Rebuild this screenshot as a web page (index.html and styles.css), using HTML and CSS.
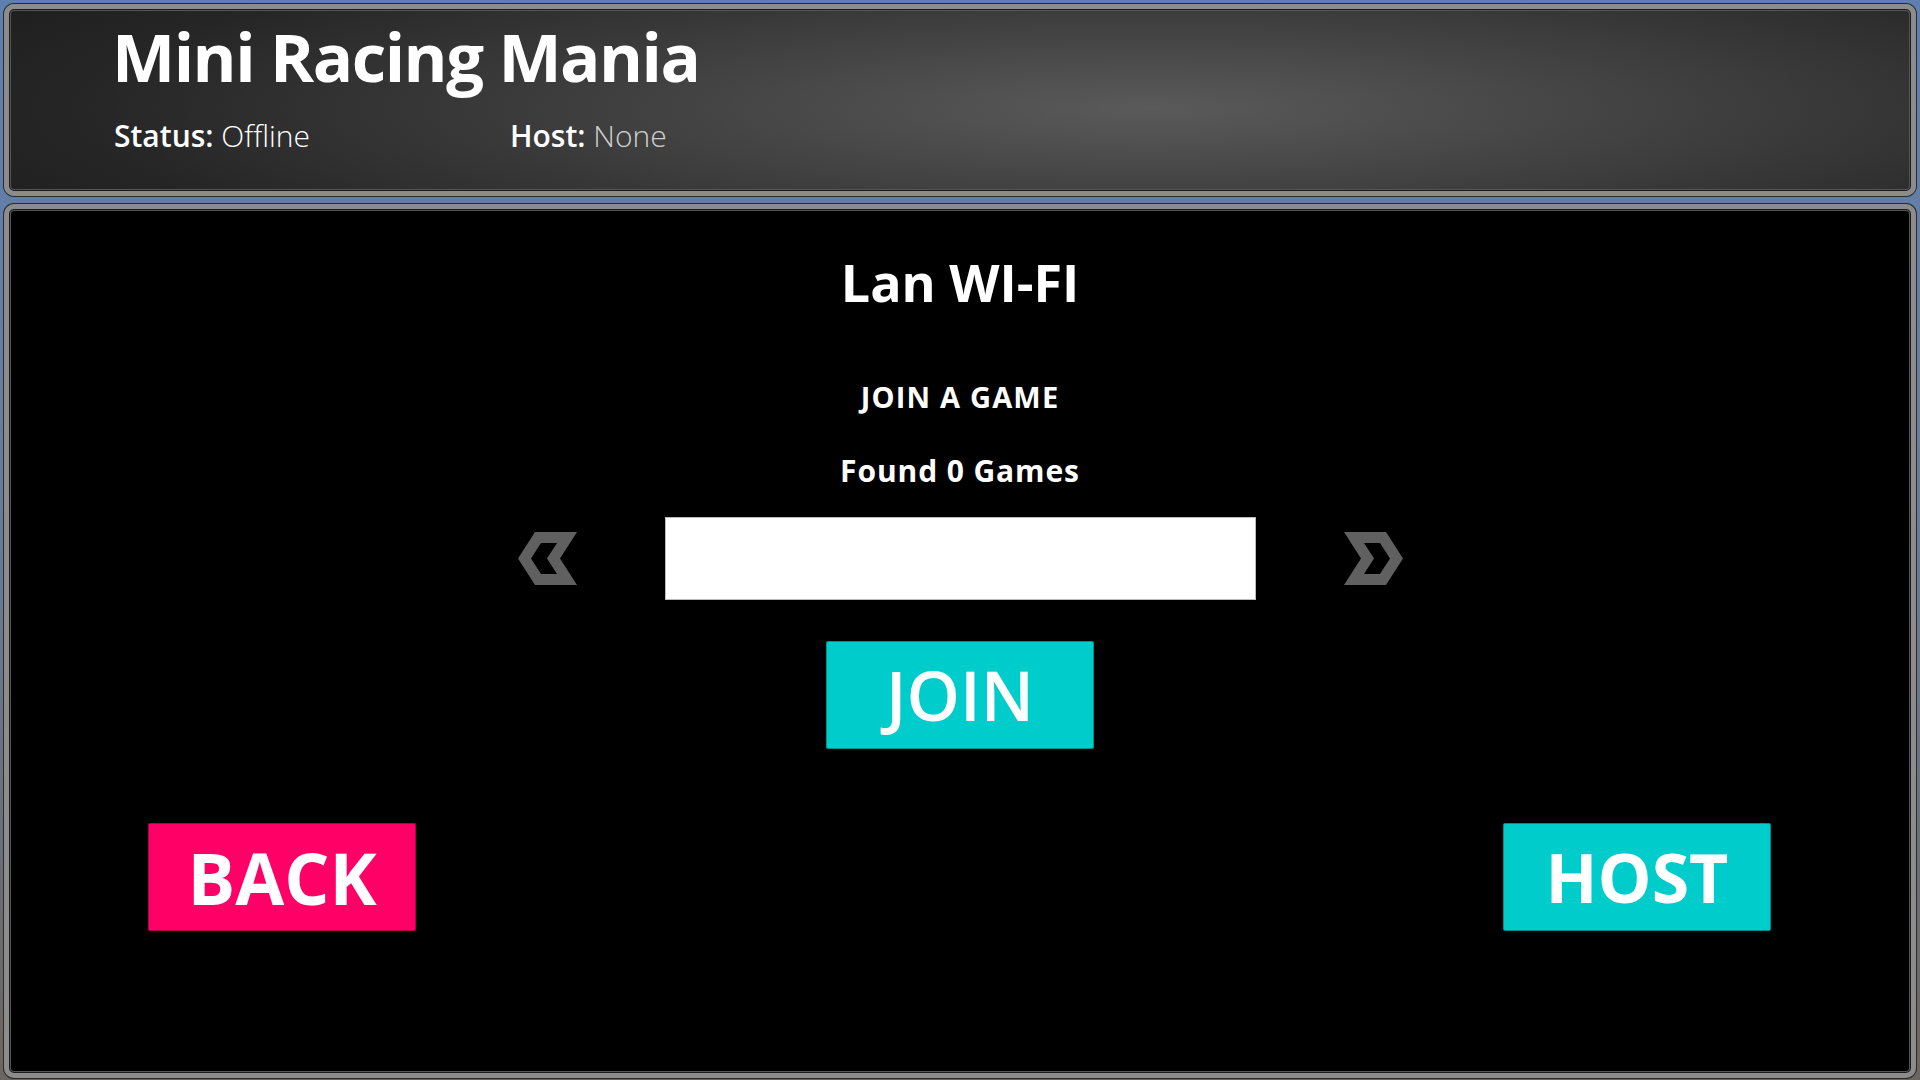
FILE: index.html
```html
<!DOCTYPE html>
<html lang="en">
<head>
<meta charset="utf-8">
<title>Mini Racing Mania</title>
<link rel="stylesheet" href="styles.css">
</head>
<body>
<div class="screen">
  <header class="panel header">
    <h1 class="game-title">Mini Racing Mania</h1>
    <div class="status-row">
      <div class="status-item"><b>Status:</b> <span class="val">Offline</span></div>
      <div class="status-item"><b>Host:</b> <span class="val dim">None</span></div>
    </div>
  </header>
  <main class="panel body">
    <h2 class="net-title">Lan WI-FI</h2>
    <div class="join-label">JOIN A GAME</div>
    <div class="found">Found 0 Games</div>
    <div class="picker">
      <svg class="chev" viewBox="0 0 59 53" aria-hidden="true"><path fill-rule="evenodd" d="M59 0H17L0 26.5 17 53H59L42 26.5Z M39 11H23L13 26.5 23 42H39L29 26.5Z"/></svg>
      <div class="game-box"></div>
      <svg class="chev" viewBox="0 0 59 53" aria-hidden="true"><path fill-rule="evenodd" d="M0 0H42L59 26.5 42 53H0L17 26.5Z M20 11H36L46 26.5 36 42H20L30 26.5Z"/></svg>
    </div>
    <button class="btn cyan join">JOIN</button>
    <div class="bottom-row">
      <button class="btn pink back">BACK</button>
      <button class="btn cyan">HOST</button>
    </div>
  </main>
</div>
</body>
</html>
```

FILE: styles.css
```css
* { box-sizing: border-box; }
html, body { margin: 0; height: 100%; }
body {
  background: linear-gradient(180deg, #5f7fb2 0%, #6a7b98 50%, #6c655f 100%);
  font-family: "Open Sans", "Noto Sans", sans-serif;
  color: #fff;
  overflow: hidden;
}
.screen {
  width: 1920px;
  height: 1080px;
  padding: 4px 4px 2px 4px;
  display: flex;
  flex-direction: column;
  gap: 8px;
}
.panel {
  border: 5px solid #8c8c8c;
  border-radius: 10px;
  box-shadow: 0 0 0 1px #2a2a2a, inset 0 0 0 1px #1a1a1a, inset 0 0 0 2px #555;
}
.header {
  height: 192px;
  flex: none;
  padding: 14px 0 0 103px;
  background: radial-gradient(ellipse 70% 120% at 60% 55%, #5a5a5a 0%, #404040 40%, #262626 80%, #1e1e1e 100%);
}
.game-title {
  margin: 0;
  font-size: 67px;
  line-height: 67px;
  font-weight: 700;
  letter-spacing: -1.5px;
}
.status-row {
  margin-top: 31px;
  display: grid;
  grid-template-columns: 396px auto;
  padding-left: 2px;
  font-size: 30px;
  line-height: 29px;
}
.status-item b { font-weight: 600; }
.status-item .val { font-weight: 300; }
.status-item .dim { color: #d0d0d0; }
.body {
  flex: 1;
  background: #000;
  display: flex;
  flex-direction: column;
  align-items: center;
  padding-top: 47px;
}
.net-title {
  margin: 0;
  font-size: 52px;
  line-height: 52px;
  font-weight: 700;
}
.join-label {
  margin-top: 74px;
  font-size: 29px;
  line-height: 29px;
  font-weight: 700;
  letter-spacing: 1.2px;
}
.found {
  margin-top: 45px;
  font-size: 30px;
  line-height: 30px;
  font-weight: 700;
  letter-spacing: 0.9px;
}
.picker {
  margin-top: 31px;
  display: flex;
  align-items: center;
  gap: 88px;
}
.chev {
  width: 59px;
  height: 53px;
  fill: #606060;
}
.game-box {
  width: 591px;
  height: 83px;
  background: #fff;
  border: 1px solid #bbb;
}
.btn {
  width: 268px;
  height: 108px;
  border: 1px solid rgba(0,0,0,0.3);
  border-radius: 2px;
  font-family: "Open Sans", "Noto Sans", sans-serif;
  font-size: 68px;
  line-height: 1;
  font-weight: 700;
  color: #fff;
  padding: 0;
  display: flex;
  align-items: center;
  justify-content: center;
}
.cyan { background: #00cccc; }
.pink { background: #ff0066; }
.back { font-size: 71px; }
.join {
  margin-top: 41px;
  font-weight: 600;
}
.bottom-row {
  margin-top: 74px;
  align-self: stretch;
  display: flex;
  justify-content: space-between;
  padding: 0 140px 0 139px;
}
```
